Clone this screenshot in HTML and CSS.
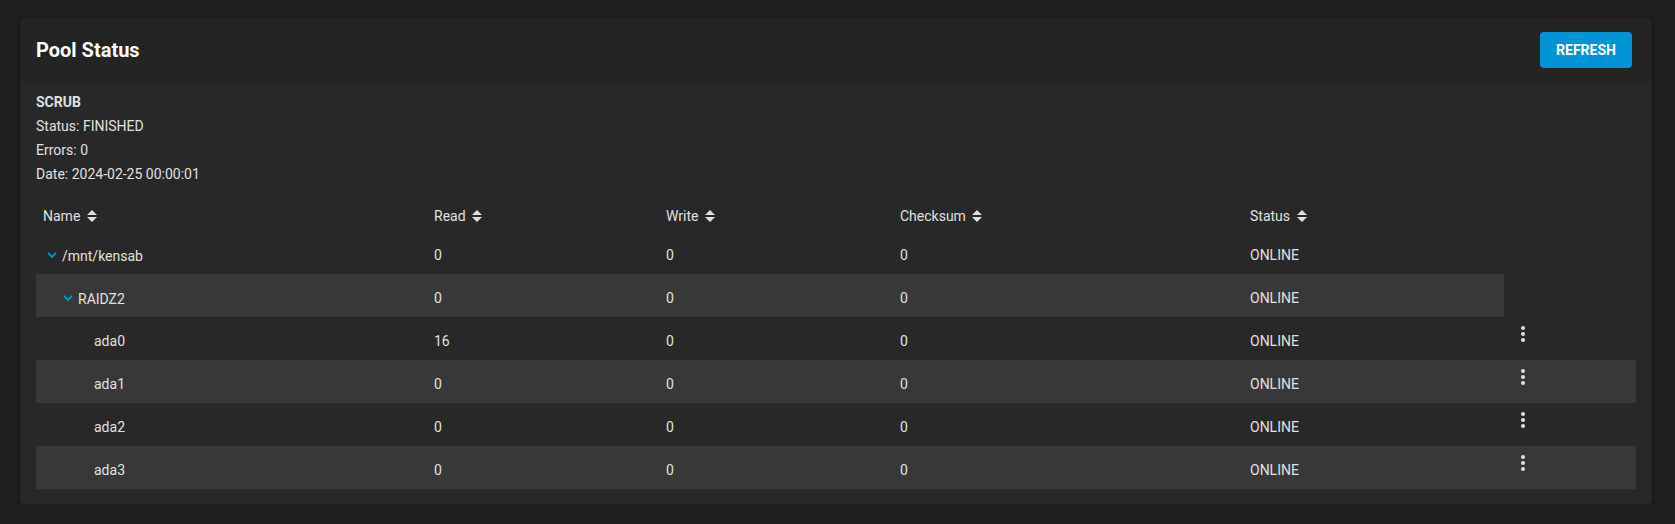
FILE: index.html
```html
<!DOCTYPE html>
<html lang="en">

<head>
	<meta charset="UTF-8">
	<meta name="viewport" content="width=device-width, initial-scale=1.0">
	<title>Pool Status</title>
	<link rel="stylesheet" href="styles.css">
</head>

<body>
	<div class="card">
		<div class="card-header">
			<h1>Pool Status</h1>
			<button type="button" class="refresh">REFRESH</button>
		</div>
		<div class="card-body">
			<div class="scrub">
				<p class="scrub-title">SCRUB</p>
				<p>Status: FINISHED</p>
				<p>Errors: 0</p>
				<p>Date: 2024-02-25 00:00:01</p>
			</div>

			<table class="pool-table">
				<colgroup>
					<col class="c-name">
					<col class="c-read">
					<col class="c-write">
					<col class="c-checksum">
					<col class="c-status">
					<col class="c-actions">
				</colgroup>
				<thead>
					<tr>
						<th>Name <svg class="sort" viewBox="0 0 10 12"><path d="M5 0 10 5H0Z M0 7H10L5 12Z"/></svg></th>
						<th>Read <svg class="sort" viewBox="0 0 10 12"><path d="M5 0 10 5H0Z M0 7H10L5 12Z"/></svg></th>
						<th>Write <svg class="sort" viewBox="0 0 10 12"><path d="M5 0 10 5H0Z M0 7H10L5 12Z"/></svg></th>
						<th>Checksum <svg class="sort" viewBox="0 0 10 12"><path d="M5 0 10 5H0Z M0 7H10L5 12Z"/></svg></th>
						<th>Status <svg class="sort" viewBox="0 0 10 12"><path d="M5 0 10 5H0Z M0 7H10L5 12Z"/></svg></th>
						<th></th>
					</tr>
				</thead>
				<tbody>
					<tr>
						<td><span class="tree lvl-0"><svg class="chevron" viewBox="0 0 10 6"><path d="M1 1 5 5 9 1"/></svg>/mnt/kensab</span></td>
						<td>0</td>
						<td>0</td>
						<td>0</td>
						<td>ONLINE</td>
						<td class="actions"></td>
					</tr>
					<tr class="alt">
						<td><span class="tree lvl-1"><svg class="chevron" viewBox="0 0 10 6"><path d="M1 1 5 5 9 1"/></svg>RAIDZ2</span></td>
						<td>0</td>
						<td>0</td>
						<td>0</td>
						<td>ONLINE</td>
						<td class="actions blank"></td>
					</tr>
					<tr>
						<td><span class="tree lvl-2">ada0</span></td>
						<td>16</td>
						<td>0</td>
						<td>0</td>
						<td>ONLINE</td>
						<td class="actions"><button type="button" class="kebab"><svg viewBox="0 0 4 16"><circle cx="2" cy="2" r="2"/><circle cx="2" cy="8" r="2"/><circle cx="2" cy="14" r="2"/></svg></button></td>
					</tr>
					<tr class="alt">
						<td><span class="tree lvl-2">ada1</span></td>
						<td>0</td>
						<td>0</td>
						<td>0</td>
						<td>ONLINE</td>
						<td class="actions"><button type="button" class="kebab"><svg viewBox="0 0 4 16"><circle cx="2" cy="2" r="2"/><circle cx="2" cy="8" r="2"/><circle cx="2" cy="14" r="2"/></svg></button></td>
					</tr>
					<tr>
						<td><span class="tree lvl-2">ada2</span></td>
						<td>0</td>
						<td>0</td>
						<td>0</td>
						<td>ONLINE</td>
						<td class="actions"><button type="button" class="kebab"><svg viewBox="0 0 4 16"><circle cx="2" cy="2" r="2"/><circle cx="2" cy="8" r="2"/><circle cx="2" cy="14" r="2"/></svg></button></td>
					</tr>
					<tr class="alt">
						<td><span class="tree lvl-2">ada3</span></td>
						<td>0</td>
						<td>0</td>
						<td>0</td>
						<td>ONLINE</td>
						<td class="actions"><button type="button" class="kebab"><svg viewBox="0 0 4 16"><circle cx="2" cy="2" r="2"/><circle cx="2" cy="8" r="2"/><circle cx="2" cy="14" r="2"/></svg></button></td>
					</tr>
				</tbody>
			</table>
		</div>
	</div>
</body>

</html>
```

FILE: styles.css
```css
* {
	margin: 0;
	padding: 0;
	box-sizing: border-box;
	font-family: Roboto, 'Liberation Sans', sans-serif;
}

body {
	background: #1e1e1e;
	color: #e0e0e0;
	font-size: 14px;
	padding: 18px 23px 0 20px;
}

.card {
	background: #282828;
	border-radius: 4px;
	box-shadow: 0 1px 3px rgba(0, 0, 0, 0.5);
	overflow: hidden;
}

.card-header {
	height: 64px;
	background: #242424;
	display: flex;
	align-items: center;
	justify-content: space-between;
	padding: 0 20px 0 16px;
}

h1 {
	color: #fff;
	font-size: 20px;
	font-weight: 700;
}

.refresh {
	width: 92px;
	height: 36px;
	background: #0095d5;
	color: #fff;
	border: none;
	border-radius: 4px;
	font-size: 14px;
	font-weight: 700;
	cursor: pointer;
}

.card-body {
	padding: 8px 16px 15px;
}

.scrub p {
	line-height: 24px;
}

.scrub-title {
	font-weight: 700;
}

.pool-table {
	margin-top: 14px;
	width: 100%;
	border-collapse: collapse;
	table-layout: fixed;
}

.c-name { width: 391px; }
.c-read { width: 232px; }
.c-write { width: 234px; }
.c-checksum { width: 350px; }
.c-status { width: 261px; }
.c-actions { width: 132px; }

th {
	height: 31px;
	text-align: left;
	font-weight: 400;
	padding-left: 7px;
	vertical-align: middle;
	white-space: nowrap;
}

.sort {
	width: 10px;
	height: 12px;
	fill: #e0e0e0;
	margin-left: 3px;
	vertical-align: -1px;
}

td {
	height: 43px;
	padding: 4px 0 0 7px;
	vertical-align: middle;
}

.alt td {
	background: #383838;
}

.alt td.blank {
	background: transparent;
}

.tree {
	display: inline-flex;
	align-items: center;
}

.lvl-1 {
	padding-left: 16px;
}

.lvl-2 {
	padding-left: 51px;
}

.chevron {
	width: 10px;
	height: 6px;
	margin: -2px 5px 0 4px;
	fill: none;
	stroke: #0095d5;
	stroke-width: 1.8;
}

td.actions {
	vertical-align: top;
	padding-top: 5px;
}

.kebab {
	width: 24px;
	height: 24px;
	background: none;
	border: none;
	display: flex;
	align-items: center;
	justify-content: center;
	cursor: pointer;
}

.kebab svg {
	width: 4px;
	height: 16px;
	fill: #e0e0e0;
}
```
